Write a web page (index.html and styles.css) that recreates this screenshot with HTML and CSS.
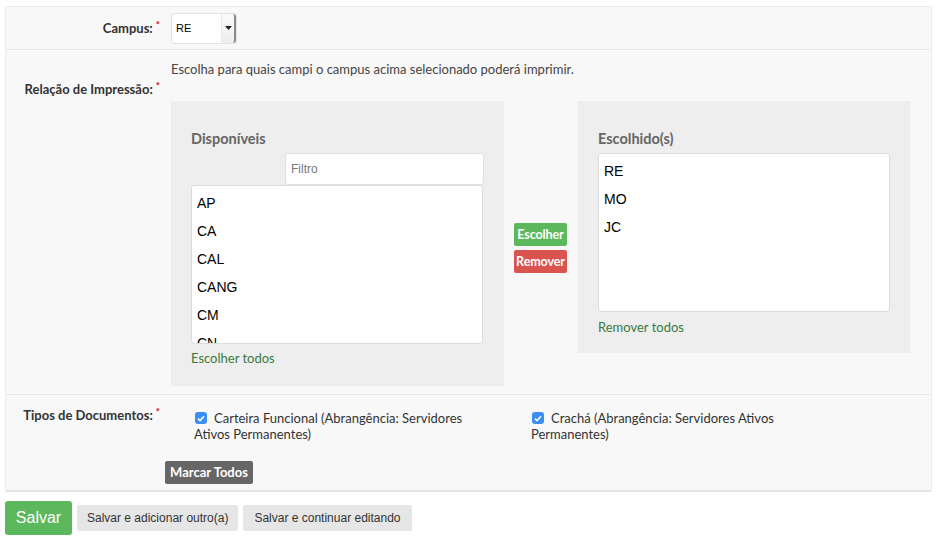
FILE: index.html
```html
<!DOCTYPE html>
<html lang="pt">
<head>
<meta charset="utf-8">
<link rel="stylesheet" href="styles.css">
</head>
<body>
<div class="page">
  <div class="panel">
    <div class="row row-campus">
      <div class="label">Campus:<span class="req">*</span></div>
      <div class="field">
        <div class="select">
          <span class="select-val">RE</span>
          <span class="select-btn"><svg width="7" height="4" viewBox="0 0 7 4"><path d="M0 0h7L3.5 4z" fill="#222"/></svg></span>
        </div>
      </div>
    </div>
    <div class="row row-rel">
      <div class="label label-rel">Relação de Impressão:<span class="req">*</span></div>
      <div class="field">
        <p class="help">Escolha para quais campi o campus acima selecionado poderá imprimir.</p>
        <div class="selector">
          <div class="box box-left">
            <h2 class="box-title">Disponíveis</h2>
            <div class="filter-wrap"><div class="filter">Filtro</div></div>
            <ul class="list list-left">
              <li>AP</li><li>CA</li><li>CAL</li><li>CANG</li><li>CM</li><li>CN</li>
            </ul>
            <a class="link">Escolher todos</a>
          </div>
          <div class="actions">
            <span class="btn-sm btn-green">Escolher</span>
            <span class="btn-sm btn-red">Remover</span>
          </div>
          <div class="box box-right">
            <h2 class="box-title">Escolhido(s)</h2>
            <ul class="list list-right">
              <li>RE</li><li>MO</li><li>JC</li>
            </ul>
            <a class="link">Remover todos</a>
          </div>
        </div>
      </div>
    </div>
    <div class="row row-tipos">
      <div class="label">Tipos de Documentos:<span class="req">*</span></div>
      <div class="field field-tipos">
        <ul class="checks">
          <li><span class="cb"><svg width="8" height="7" viewBox="0 0 8 7"><path d="M1 3.6l2 2L7 1.2" fill="none" stroke="#fff" stroke-width="1.5"/></svg></span>Carteira Funcional (Abrangência: Servidores Ativos Permanentes)</li>
          <li><span class="cb"><svg width="8" height="7" viewBox="0 0 8 7"><path d="M1 3.6l2 2L7 1.2" fill="none" stroke="#fff" stroke-width="1.5"/></svg></span>Crachá (Abrangência: Servidores Ativos Permanentes)</li>
        </ul>
        <span class="btn-mark">Marcar Todos</span>
      </div>
    </div>
  </div>
  <div class="submit-row">
    <span class="btn-save">Salvar</span>
    <span class="btn-grey">Salvar e adicionar outro(a)</span>
    <span class="btn-grey">Salvar e continuar editando</span>
  </div>
</div>
</body>
</html>
```
FILE: styles.css
```css
* { box-sizing: border-box; }
html, body { margin: 0; padding: 0; background: #fff; }
body { font-family: Lato, "Open Sans", sans-serif; color: #333; font-size: 13px; }
.page { padding: 6px 0 0 5px; width: 932px; }
.panel {
  width: 927px;
  background: #f8f8f8;
  border: 1px solid #ececec;
  border-bottom: 2px solid #e4e4e4;
  border-radius: 2px;
}
.row { display: flex; border-bottom: 1px solid #e8e8e8; }
.row:last-child { border-bottom: none; }
.label {
  width: 154px;
  text-align: right;
  font-weight: bold;
  font-size: 13px;
  color: #333;
  flex: none;
}
.req { color: #c00; font-size: 10px; vertical-align: top; margin-left: 3px; position: relative; top: -2px; }
.field { margin-left: 11px; }
.row-campus { height: 43px; align-items: center; }
.select {
  width: 66px; height: 31px;
  background: #fff;
  border: 1px solid #e2e2e2;
  border-radius: 3px;
  display: flex; align-items: stretch;
}
.select-val { flex: 1; font-family: "Liberation Sans", Arial, sans-serif; font-size: 11px; color: #000; padding-left: 4px; line-height: 29px; }
.select-btn {
  width: 15px;
  border-left: 1px solid #e8e8e8;
  border-right: 2px solid #8a8a8a;
  background: linear-gradient(#fafafa, #eee);
  display: flex; align-items: center; justify-content: center;
  border-radius: 0 3px 3px 0;
}
.row-rel { height: 345px; }
.label-rel { padding-top: 31px; }
.help { margin: 10px 0 0; line-height: 18px; color: #444; font-size: 13px; }
.selector { display: flex; margin-top: 23px; }
.box { background: #eeeeee; padding: 28px 20px 0; }
.box-left { width: 333px; height: 285px; }
.box-right { width: 332px; height: 252px; }
.box-title { margin: 0; font-size: 14.5px; font-weight: bold; color: #666; line-height: 20px; height: 24px; }
.filter-wrap { display: flex; justify-content: flex-end; }
.filter {
  width: 199px; height: 32px;
  background: #fff;
  border: 1px solid #e0e0e0;
  border-radius: 3px;
  font-family: "Liberation Sans", Arial, sans-serif;
  font-size: 12px; color: #777;
  line-height: 30px; padding-left: 5px;
}
.list {
  list-style: none; margin: 0; padding: 3px 0 0 5px;
  background: #fff;
  border: 1px solid #dcdcdc;
  border-radius: 3px;
  width: 292px; height: 159px;
  overflow: hidden;
  font-family: "Liberation Sans", Arial, sans-serif;
  font-size: 14px; color: #000;
}
.list li { height: 28px; line-height: 28px; }
.link { display: block; color: #3b7a3e; font-size: 13px; line-height: 16px; margin-top: 6px; }
.list-right + .link { margin-top: 7px; }
.actions {
  width: 74px;
  height: 285px;
  display: flex; flex-direction: column; align-items: center; justify-content: center;
  gap: 4px;
  padding-top: 9px;
  padding-right: 1px;
}
.btn-sm {
  display: block; width: 53px; height: 23px;
  color: #fff; font-weight: bold; font-size: 12.5px;
  text-align: center; line-height: 23px;
  border-radius: 2px;
  letter-spacing: -0.1px;
}
.btn-green { background: #5cb85c; }
.btn-red { background: #d9534f; }
.row-tipos { height: 95px; }
.row-tipos .label { padding-top: 12px; }
.field-tipos { margin-left: 34px; }
.checks { list-style: none; margin: 15px 0 0; padding: 0; display: flex; }
.checks li { width: 300px; margin-right: 37px; font-size: 13px; line-height: 16px; height: 32px; color: #333; }
.cb {
  display: inline-block; line-height: 0; text-align: center;
  width: 12px; height: 12px; padding-top: 3px;
  background: #3a8ef5; border-radius: 3px;
  vertical-align: top; margin: 2px 7px 0 1px;
}
.btn-mark {
  display: inline-block;
  margin-left: -29px; margin-top: 19px;
  background: #666; color: #fff; font-weight: bold; font-size: 13px;
  width: 88px; text-align: center; height: 23px; line-height: 23px;
  border-radius: 2px;
}
.submit-row { display: flex; align-items: center; gap: 5px; margin-top: 9px; }
.btn-save {
  background: #5cb85c; color: #fff;
  font-family: "Liberation Sans", Arial, sans-serif; font-size: 16px;
  width: 67px; height: 34px; line-height: 34px; text-align: center;
  border-radius: 3px;
}
.btn-grey {
  background: #e6e6e6; color: #333;
  font-family: "Liberation Sans", Arial, sans-serif; font-size: 12px;
  height: 26px; line-height: 26px; padding: 0 10px;
  border-radius: 2px;
}
.btn-grey:last-child { padding: 0 11px; }
```
